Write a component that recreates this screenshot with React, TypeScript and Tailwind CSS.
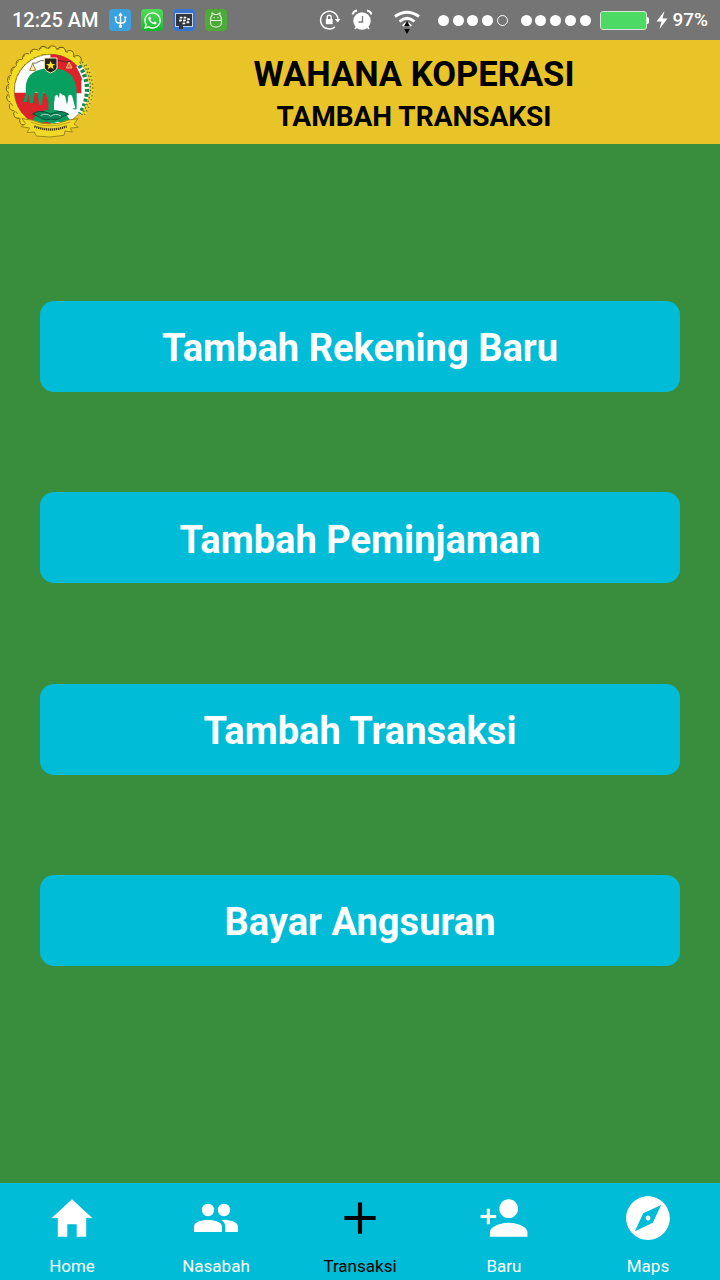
import { IoMdHome, IoMdPersonAdd, IoMdCompass, IoMdAdd } from "react-icons/io";
import { FaWhatsapp, FaBlackberry } from "react-icons/fa";
import type { ReactNode } from "react";

const actions = ["Tambah Rekening Baru", "Tambah Peminjaman", "Tambah Transaksi", "Bayar Angsuran"];

function Emblem() {
  return (
    <svg viewBox="0 0 312 312" className="size-[104px] shrink-0" strokeLinejoin="round">
      <path d="M72 242A121 121 0 1 1 246 75" fill="none" stroke="#5f4d08" strokeWidth="28" strokeDasharray="0 27" strokeLinecap="round" />
      <path d="M72 242A121 121 0 1 1 246 75" fill="none" stroke="#f2dc24" strokeWidth="23" strokeDasharray="0 27" strokeLinecap="round" />
      <path d="M72 236A116 116 0 1 1 240 77" fill="none" stroke="#f2dc24" strokeWidth="15" />
      <path d="M72 240A121 121 0 1 1 243 72" fill="none" stroke="#8b7412" strokeWidth="3" strokeDasharray="9 18" />
      <circle cx="152" cy="152" r="109" fill="#fff" stroke="#7c690f" strokeWidth="2" />
      <path d="M152 43A109 109 0 0 1 254 121H152z" fill="#dc2329" />
      <path d="M152 43A109 109 0 0 1 255 120L244 120V160H152z" fill="#dc2329" />
      <path d="M43 158A109 109 0 0 0 152 261V158z" fill="#dc2329" />
      <path d="M236 76q46 70 2 146" fill="none" stroke="#fff" strokeWidth="17" />
      <path d="M238 76q45 70 2 146" fill="none" stroke="#14884e" strokeWidth="13" strokeDasharray="9 6" />
      <path d="M251 66q50 80 -3 160" fill="none" stroke="#e9d333" strokeWidth="14" />
      <path d="M247 66q50 80 -3 160" fill="none" stroke="#6b6214" strokeWidth="4" strokeDasharray="4 7" />
      <path d="M258 74q43 76 -5 150" fill="none" stroke="#6f5e14" strokeWidth="5" strokeDasharray="3 9" />
      <path d="M78 156C74 112 96 94 124 88q28-10 56 0c30 6 50 28 50 68v50q-6 6-12-1l-4-32-8-8-4 39h-8l-7-40-8-7-4 42h-8l-5-21v32q22 0 39 17l10 14-18 9-20-5q-16 8-35 0l-23 5-18-9 10-14q16-17 38-17v-24l-6-20-8-10-6 38h-8l-5-38-8 2-5 32h-8l-5-28-6 24H70z" fill="#08a061" />
      <path d="M164 204v-34q7-11 12 2l5 23 4-26q6-9 11 2l5 24 5-27q7-8 11 2l9 35z" fill="#fff" />
      <path d="M96 70q12 2 26-8h58q16 8 34 1" fill="none" stroke="#222" strokeWidth="2" />
      <path d="M98 71l-9 20h18z" fill="#fff3b6" stroke="#a48125" strokeWidth="3" />
      <path d="M207 66l-8 18h17z" fill="#dc6652" stroke="#f2c066" strokeWidth="3" />
      <path d="M133 54h38v30q-2 9-19 15-17-6-19-15z" fill="#28251b" stroke="#f8edbf" strokeWidth="3" />
      <path d="M152 63l4 9h10l-8 6 3 10-9-6-9 6 3-10-8-6h10z" fill="#ffe12e" />
      <path d="M98 222q20-14 43-4l11 4 12-4q23-9 42 5-20 6-28 13-13 7-26 1-13 6-26-1-11-8-28-14z" fill="#078657" stroke="#0a513b" strokeWidth="3" />
      <path d="M122 226q18-8 30 3 14-11 31-1" fill="none" stroke="#aed6c4" strokeWidth="3" />
      <path d="M66 236l29 4q56 24 110 0l29-4-12 16 13 10-24 2 6 12-22-3-3 13q-42 9-83 2l-6-12-22 2 8-14-26-4 14-9z" fill="#f1d927" stroke="#a18919" strokeWidth="3" />
      <path d="M92 246q57 24 119 0" fill="none" stroke="#a18919" strokeWidth="2" />
      <path d="M103 259q48 19 97 0" fill="none" stroke="#4c3f14" strokeWidth="7" strokeDasharray="4 2" />
    </svg>
  );
}

function Tab({ label, active, children }: { label: string; active?: boolean; children: ReactNode }) {
  return (
    <button className={active ? "flex w-36 flex-col items-center text-black" : "flex w-36 flex-col items-center text-white"}>
      <span className="flex h-[70px] items-center justify-center">{children}</span>
      <span className="text-[17px] leading-[26px]">{label}</span>
    </button>
  );
}

function Dots({ filled, empty }: { filled: number; empty?: boolean }) {
  return (
    <span className="flex gap-[3.7px]">
      {Array.from({ length: filled }, (_, i) => <i key={i} className="size-[11px] rounded-full bg-white" />)}
      {empty && <i className="size-[11px] rounded-full border-[1.5px] border-white" />}
    </span>
  );
}

function StatusBar() {
  return (
    <div className="flex h-10 shrink-0 items-center bg-[#757575] pl-3 font-medium text-white">
      <span className="w-[97px] text-[20px]">12:25 AM</span>
      <span className="flex w-[210px] gap-[10px]">
        <span className="flex size-[22px] items-center justify-center rounded bg-[#3aa1dc]">
          <svg viewBox="0 0 16 16" className="size-[17px]" fill="none" stroke="white" strokeWidth="1.3">
            <path d="M8 2v12M3.500 4.500v3c0 2.200 2 3 4.500 3s4.500-.8 4.500-3v-3M6.500 3.500L8 1.500l1.500 2M2.500 5h2M11.500 5h2" />
            <circle cx="8" cy="13.500" r="1" fill="white" />
          </svg>
        </span>
        <span className="flex size-[22px] items-center justify-center rounded bg-linear-to-b from-[#50dd5b] to-[#08b828]"><FaWhatsapp className="size-[19px]" /></span>
        <span className="flex size-[22px] items-center justify-center rounded bg-[#3974ca]">
          <span className="relative flex h-[14px] w-[18px] items-center justify-center border border-[#c7d0dd] bg-[#30343c]">
            <FaBlackberry className="size-[11px]" />
            <i className="absolute -bottom-[3px] left-[3px] h-[3px] w-1 bg-[#30343c]" />
          </span>
        </span>
        <span className="flex size-[22px] items-center justify-center rounded bg-[#4eaa38]">
          <svg viewBox="0 0 22 22" className="size-[22px]" fill="none" stroke="#e2f5d9" strokeWidth="1.1">
            <path d="M5.500 11.500h11v2a4.500 4.500 0 0 1-4.500 4.500h-2a4.500 4.500 0 0 1-4.500-4.500zM6 11.500q-1-3 1-5V4l2.500 1.500h3L15 4v2.500q2 2 1 5M8.500 8.500h1M12.500 8.500h1" />
          </svg>
        </span>
      </span>
      <svg viewBox="0 0 22 22" className="size-[22px]" fill="none" stroke="white" strokeWidth="1.400">
        <path d="M16 17.900A8.800 8.800 0 1 1 18.800 8.500v2" />
        <path d="M15.800 10h5.700l-2.800 3.400z" fill="white" stroke="none" />
        <path d="M6.800 10h6.800v5.200H6.800z" fill="white" stroke="none" />
        <path d="M8.200 10V8.300a2 2 0 0 1 4 0V10" />
      </svg>
      <svg viewBox="0 0 22 22" className="ml-[10px] size-[22px]">
        <circle cx="11" cy="12" r="8.700" fill="white" />
        <path d="M1.500 5.500q1-3.500 4.500-4M16 1.500q3.500.5 4.500 4M5.500 18l-1.500 2M16.500 18l1.500 2" stroke="white" strokeWidth="1.800" fill="none" />
        <path d="M11.500 7v6h-4" fill="none" stroke="#777" strokeWidth="1.300" />
      </svg>
      <svg viewBox="0 0 28 26" className="mt-1 ml-[20px] h-[26px] w-7" fill="none" stroke="white">
        <path d="M2 7.500q12-8.500 24 0" strokeWidth="3" />
        <path d="M6.500 12.500q7.500-6.500 15 0" strokeWidth="2.800" />
        <path d="M10 17q4-5 8 0" strokeWidth="2.500" />
        <path d="M14 12l2.800 5h-5.600zM14 25l-2.800-5h5.600z" fill="black" stroke="none" />
      </svg>
      <span className="ml-[17px]"><Dots filled={4} empty /></span>
      <span className="ml-[13px]"><Dots filled={5} /></span>
      <span className="ml-[9px] h-[19px] w-[47px] rounded-[3px] border border-[#d8e6d8] bg-[#4cda64]" />
      <span className="h-[7px] w-[2.500px] rounded-r-sm bg-white" />
      <svg viewBox="0 0 12 18" className="ml-[7px] h-[18px] w-3" fill="white"><path d="M8.500 0L0.500 10.500h5L3.500 18l8-10.500h-5z" /></svg>
      <span className="mr-3 ml-auto text-[19px]">97%</span>
    </div>
  );
}

export default function App() {
  return (
    <div className="flex h-[1280px] w-[720px] flex-col overflow-hidden bg-[#388e3c] font-[Roboto,sans-serif]">
      <StatusBar />
      <header className="flex h-[104px] shrink-0 bg-[#e9c429] text-black">
        <Emblem />
        <div className="flex flex-1 flex-col items-center pt-3 pl-1 font-bold">
          <h1 className="text-[34.6px] leading-[44px]">WAHANA KOPERASI</h1>
          <h2 className="mt-px text-[28px] leading-[40px]">TAMBAH TRANSAKSI</h2>
        </div>
      </header>
      <main className="flex h-[1039px] shrink-0 flex-col gap-[100.3px] px-10 pt-[157px]">
        {actions.map((a) => (
          <button key={a} className="h-[91px] shrink-0 rounded-[14px] bg-[#00bcd7] pt-[5px] text-[38.1px] font-bold text-white">{a}</button>
        ))}
      </main>
      <nav className="flex h-[97px] shrink-0 bg-[#00bcd7]">
        <Tab label="Home"><IoMdHome className="size-[50px]" /></Tab>
        <Tab label="Nasabah">
          <svg viewBox="0 0 24 24" className="size-12" fill="currentColor">
            <circle cx="8" cy="8" r="3.100" />
            <circle cx="16" cy="8" r="3.100" />
            <path d="M8 13c-2.330 0-7 .7-7 3.200V19h14v-2.800C15 13.700 10.330 13 8 13zM16 13l-1.200.1c1.200.8 1.800 1.700 1.800 3.100V19H23v-2.800c0-2.500-4.670-3.200-7-3.200z" />
          </svg>
        </Tab>
        <Tab label="Transaksi" active><IoMdAdd className="size-[50px]" /></Tab>
        <Tab label="Baru"><IoMdPersonAdd className="size-[50px]" /></Tab>
        <Tab label="Maps"><IoMdCompass className="size-[50px]" /></Tab>
      </nav>
    </div>
  );
}
